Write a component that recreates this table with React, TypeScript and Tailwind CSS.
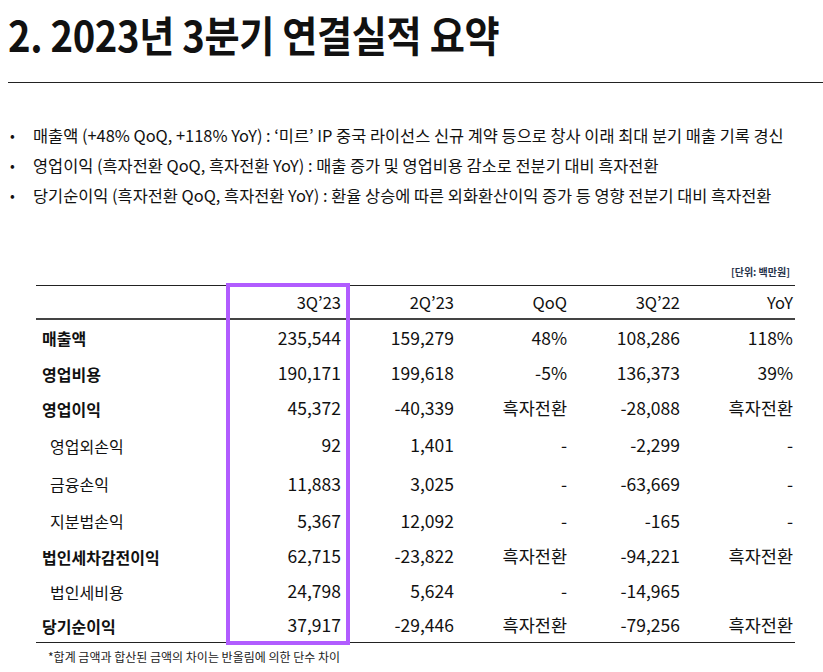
import React from "react";

type Row = {
  label: string;
  bold: boolean;
  h: string;
  v: [string, string, string, string, string];
};

const rows: Row[] = [
  { label: "매출액", bold: true, h: "h-[36px]", v: ["235,544", "159,279", "48%", "108,286", "118%"] },
  { label: "영업비용", bold: true, h: "h-[35px]", v: ["190,171", "199,618", "-5%", "136,373", "39%"] },
  { label: "영업이익", bold: true, h: "h-[35px]", v: ["45,372", "-40,339", "흑자전환", "-28,088", "흑자전환"] },
  { label: "영업외손익", bold: false, h: "h-[39px]", v: ["92", "1,401", "-", "-2,299", "-"] },
  { label: "금융손익", bold: false, h: "h-[38px]", v: ["11,883", "3,025", "-", "-63,669", "-"] },
  { label: "지분법손익", bold: false, h: "h-[36px]", v: ["5,367", "12,092", "-", "-165", "-"] },
  { label: "법인세차감전이익", bold: true, h: "h-[35px]", v: ["62,715", "-23,822", "흑자전환", "-94,221", "흑자전환"] },
  { label: "법인세비용", bold: false, h: "h-[35px]", v: ["24,798", "5,624", "-", "-14,965", ""] },
  { label: "당기순이익", bold: true, h: "h-[33px]", v: ["37,917", "-29,446", "흑자전환", "-79,256", "흑자전환"] },
];

const headers = ["3Q’23", "2Q’23", "QoQ", "3Q’22", "YoY"];

export default function App() {
  return (
    <div
      className="w-[823px] h-[672px] bg-white text-[#111] overflow-hidden"
      style={{ fontFamily: '"Noto Sans CJK KR", "Noto Sans", sans-serif' }}
    >
      {/* Title */}
      <div className="pt-[12px] pl-[8px] h-[75px]">
        <div className="inline-block origin-left scale-x-[0.91] text-[42px] leading-[44px] font-bold tracking-[-0.01em] whitespace-nowrap">
          2. 2023년 3분기 연결실적 요약
        </div>
      </div>
      <div className="ml-[8px] h-px bg-[#222] mt-[7px]" />

      {/* Bullets */}
      <ul className="mt-[37px] flex flex-col text-[16.4px] leading-[30px]">
        {[
          "매출액 (+48% QoQ, +118% YoY) : ‘미르’ IP 중국 라이선스 신규 계약 등으로 창사 이래 최대 분기 매출 기록 경신",
          "영업이익 (흑자전환 QoQ, 흑자전환 YoY) : 매출 증가 및 영업비용 감소로 전분기 대비 흑자전환",
          "당기순이익 (흑자전환 QoQ, 흑자전환 YoY) : 환율 상승에 따른 외화환산이익 증가 등 영향 전분기 대비 흑자전환",
        ].map((t) => (
          <li key={t} className="flex whitespace-nowrap">
            <span className="w-[33px] pl-[10px] text-[14px]">•</span>
            <span>{t}</span>
          </li>
        ))}
      </ul>

      {/* Unit */}
      <div className="mt-[55px] w-[790px] text-right text-[10px] leading-[14px] font-bold text-[#26324a]">
        [단위: 백만원]
      </div>

      {/* Table */}
      <div className="relative ml-[36px] w-[759px] mt-[6px]">
        <div className="border-t-[1.5px] border-[#222]">
          <div className="grid grid-cols-[194px_repeat(5,113px)] h-[34px] items-center text-[16.5px] border-b-2 border-[#444]">
            <div />
            {headers.map((h) => (
              <div key={h} className="text-right pr-[2px]">
                {h}
              </div>
            ))}
          </div>
          {rows.map((r) => (
            <div
              key={r.label}
              className={`grid grid-cols-[194px_repeat(5,113px)] items-center ${r.h}`}
            >
              <div
                className={
                  r.bold
                    ? "pl-[6px] text-[16px] font-bold"
                    : "pl-[14px] text-[16px]"
                }
              >
                {r.label}
              </div>
              {r.v.map((x, i) => (
                <div key={i} className="text-right pr-[2px] text-[17.5px]">
                  {x}
                </div>
              ))}
            </div>
          ))}
        </div>
        <div className="border-t-[1.5px] border-[#222]" />
        {/* Highlight box */}
        <div className="absolute left-[190px] top-[-2px] w-[124px] h-[362px] border-4 border-[#b15cff]" />
      </div>

      <div className="mt-[6px] pl-[48px] text-[12px] leading-[16px] text-[#222]">
        *합계 금액과 합산된 금액의 차이는 반올림에 의한 단수 차이
      </div>
    </div>
  );
}
